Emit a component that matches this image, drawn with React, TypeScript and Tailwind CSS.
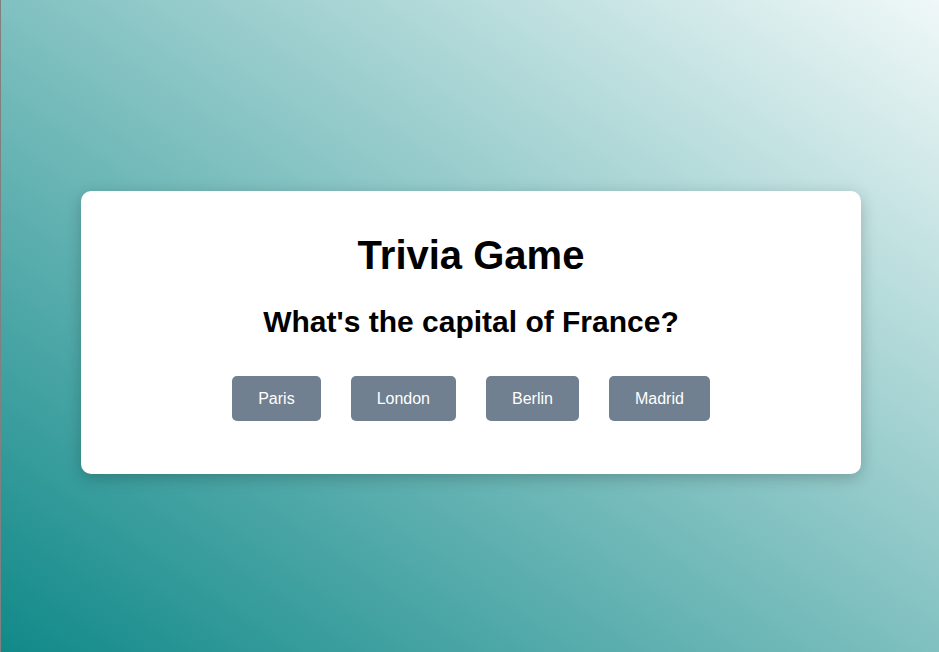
export default function App() {
  const answers = ["Paris", "London", "Berlin", "Madrid"];

  return (
    <div className="flex min-h-screen items-center justify-center border-l border-[#808080] bg-[linear-gradient(to_top_right,#118989,#f0f8f8)] pl-[2px] pt-[13px] font-['Liberation_Sans',Arial,sans-serif]">
      <div className="w-[780px] rounded-[10px] bg-white pb-[53px] pt-[41px] text-center shadow-[0_4px_16px_rgba(0,0,0,0.22)]">
        <h1 className="text-[40px] font-bold leading-[46px] text-black">Trivia Game</h1>
        <h2 className="mt-[27px] text-[30px] font-bold leading-[34px] text-black">
          What's the capital of France?
        </h2>
        <div className="mt-[37px] flex justify-center gap-[30px]">
          {answers.map((a) => (
            <button
              key={a}
              className="h-[45px] rounded-[5px] bg-[#708090] px-[26px] text-[16px] text-white"
            >
              {a}
            </button>
          ))}
        </div>
      </div>
    </div>
  );
}
